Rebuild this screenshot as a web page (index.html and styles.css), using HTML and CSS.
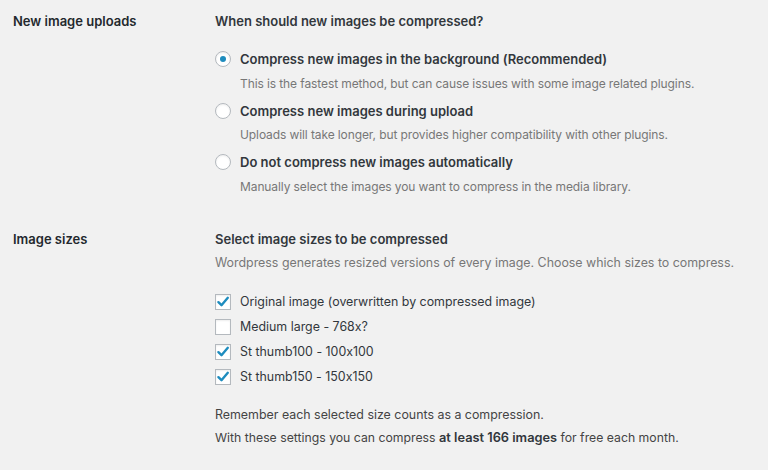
FILE: index.html
```html
<!DOCTYPE html>
<html>
<head>
<meta charset="utf-8">
<link rel="stylesheet" href="styles.css">
</head>
<body>
<div class="page">
  <section class="row row-uploads">
    <div class="label">New image uploads</div>
    <div class="field">
      <div class="heading">When should new images be compressed?</div>
      <div class="options">
        <div class="option">
          <div class="opt-line"><span class="radio checked"></span><span class="opt-title">Compress new images in the background (Recommended)</span></div>
          <div class="desc opt-desc">This is the fastest method, but can cause issues with some image related plugins.</div>
        </div>
        <div class="option">
          <div class="opt-line"><span class="radio"></span><span class="opt-title">Compress new images during upload</span></div>
          <div class="desc opt-desc">Uploads will take longer, but provides higher compatibility with other plugins.</div>
        </div>
        <div class="option">
          <div class="opt-line"><span class="radio"></span><span class="opt-title">Do not compress new images automatically</span></div>
          <div class="desc opt-desc">Manually select the images you want to compress in the media library.</div>
        </div>
      </div>
    </div>
  </section>
  <section class="row row-sizes">
    <div class="label">Image sizes</div>
    <div class="field">
      <div class="heading">Select image sizes to be compressed</div>
      <div class="desc sub">Wordpress generates resized versions of every image. Choose which sizes to compress.</div>
      <div class="checks">
        <div class="check-line"><span class="checkbox checked"><svg viewBox="0 0 16 16" width="16" height="16"><path d="M3.4 8.2 L6.5 11.2 L12.8 3.8" fill="none" stroke="#1e8cbe" stroke-width="2.4" stroke-linecap="round" stroke-linejoin="round"/></svg></span><span>Original image (overwritten by compressed image)</span></div>
        <div class="check-line"><span class="checkbox"></span><span>Medium large - 768x?</span></div>
        <div class="check-line"><span class="checkbox checked"><svg viewBox="0 0 16 16" width="16" height="16"><path d="M3.4 8.2 L6.5 11.2 L12.8 3.8" fill="none" stroke="#1e8cbe" stroke-width="2.4" stroke-linecap="round" stroke-linejoin="round"/></svg></span><span>St thumb100 - 100x100</span></div>
        <div class="check-line"><span class="checkbox checked"><svg viewBox="0 0 16 16" width="16" height="16"><path d="M3.4 8.2 L6.5 11.2 L12.8 3.8" fill="none" stroke="#1e8cbe" stroke-width="2.4" stroke-linecap="round" stroke-linejoin="round"/></svg></span><span>St thumb150 - 150x150</span></div>
      </div>
      <div class="note first">Remember each selected size counts as a compression.</div>
      <div class="note second">With these settings you can compress <strong>at least 166 images</strong> for free each month.</div>
    </div>
  </section>
</div>
</body>
</html>
```
FILE: styles.css
```css
html, body {
  margin: 0;
  padding: 0;
  background: #f1f1f1;
}
body {
  font-family: Inter, "Noto Sans", sans-serif;
  font-feature-settings: "calt" 0;
  font-size: 12.4px;
  line-height: 20px;
  color: #32373c;
  width: 768px;
  height: 470px;
  overflow: hidden;
}
.page {
  padding: 11px 0 0 13px;
}
.row {
  display: grid;
  grid-template-columns: 202px 1fr;
}
.row-sizes {
  margin-top: 32px;
}
.label {
  font-size: 13px;
  font-weight: 600;
  color: #23282d;
}
.heading {
  font-size: 13px;
  font-weight: 600;
  color: #32373c;
}
.options {
  margin-top: 18px;
  display: flex;
  flex-direction: column;
  gap: 7px;
}
.opt-line {
  display: flex;
  align-items: center;
}
.opt-title {
  font-size: 13px;
  font-weight: 600;
  color: #32373c;
}
.desc {
  color: #777;
}
.opt-desc {
  font-size: 12px;
  letter-spacing: -0.1px;
  margin-top: 4.5px;
  padding-left: 25px;
}
.radio {
  box-sizing: border-box;
  width: 16px;
  height: 16px;
  border: 1px solid #b4b9be;
  border-radius: 50%;
  background: #fff;
  box-shadow: inset 0 1px 2px rgba(0,0,0,0.07);
  margin-right: 9px;
  display: flex;
  align-items: center;
  justify-content: center;
}
.radio.checked::before {
  content: "";
  width: 6px;
  height: 6px;
  border-radius: 50%;
  background: #1e8cbe;
}
.sub {
  margin-top: 4.5px;
}
.checks {
  margin-top: 18.5px;
  display: flex;
  flex-direction: column;
  gap: 5px;
}
.check-line {
  display: flex;
  align-items: center;
  height: 20px;
  color: #32373c;
}
.checkbox {
  box-sizing: border-box;
  width: 16px;
  height: 16px;
  border: 1px solid #b4b9be;
  background: #fff;
  box-shadow: inset 0 1px 2px rgba(0,0,0,0.07);
  margin-right: 9px;
  position: relative;
}
.checkbox svg {
  position: absolute;
  left: -1px;
  top: -1px;
}
.note {
  color: #444;
  margin-top: 3px;
}
.note.first {
  margin-top: 18px;
}
.note.second {
  font-size: 12.25px;
}
.note strong {
  font-size: 12.8px;
  font-weight: 600;
  color: #32373c;
}
```
